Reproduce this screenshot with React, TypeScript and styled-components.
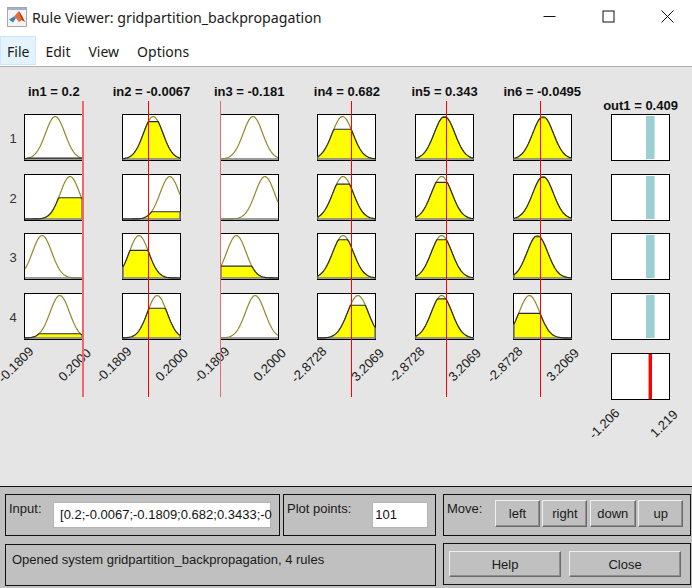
import React from "react";
import styled, { createGlobalStyle } from "styled-components";

const GlobalStyle = createGlobalStyle`
  html, body {
    margin: 0;
    padding: 0;
    background: #e5e5e5;
  }
`;

type Mf = { center: number; level: number };
type Input = {
  title: string;
  value: number;
  faded?: boolean;
  sigma: number;
  ticks: [string, string];
  rules: Mf[];
};

const inputs: Input[] = [
  {
    title: "in1 = 0.2",
    value: 1,
    faded: true,
    sigma: 0.17,
    ticks: ["-0.1809", "0.2000"],
    rules: [
      { center: 0.53, level: 0.02 },
      { center: 0.79, level: 0.5 },
      { center: 0.3, level: 0 },
      { center: 0.61, level: 0.1 },
    ],
  },
  {
    title: "in2 = -0.0067",
    value: 0.45,
    sigma: 0.17,
    ticks: ["-0.1809", "0.2000"],
    rules: [
      { center: 0.53, level: 0.88 },
      { center: 0.82, level: 0.17 },
      { center: 0.28, level: 0.65 },
      { center: 0.6, level: 0.7 },
    ],
  },
  {
    title: "in3 = -0.181",
    value: 0,
    faded: true,
    sigma: 0.17,
    ticks: ["-0.1809", "0.2000"],
    rules: [
      { center: 0.56, level: 0 },
      { center: 0.77, level: 0 },
      { center: 0.27, level: 0.28 },
      { center: 0.6, level: 0 },
    ],
  },
  {
    title: "in4 = 0.682",
    value: 0.58,
    sigma: 0.18,
    ticks: ["-2.8728", "3.2069"],
    rules: [
      { center: 0.43, level: 0.7 },
      { center: 0.44, level: 0.82 },
      { center: 0.44, level: 0.9 },
      { center: 0.7, level: 0.77 },
    ],
  },
  {
    title: "in5 = 0.343",
    value: 0.53,
    sigma: 0.18,
    ticks: ["-2.8728", "3.2069"],
    rules: [
      { center: 0.5, level: 0.98 },
      { center: 0.45, level: 0.86 },
      { center: 0.45, level: 0.9 },
      { center: 0.45, level: 0.92 },
    ],
  },
  {
    title: "in6 = -0.0495",
    value: 0.47,
    sigma: 0.18,
    ticks: ["-2.8728", "3.2069"],
    rules: [
      { center: 0.51, level: 0.97 },
      { center: 0.51, level: 0.98 },
      { center: 0.41, level: 0.97 },
      { center: 0.27, level: 0.58 },
    ],
  },
];

const W = 57;
const BASE = 44;
const PEAK = 42.5;

const gauss = (t: number, center: number, sigma: number) =>
  Math.exp(-((t - center) ** 2) / (2 * sigma * sigma));

const MfCurve = ({ mf, sigma }: { mf: Mf; sigma: number }) => {
  const full: string[] = [];
  const clipped: string[] = [];
  for (let i = 0; i <= 60; i++) {
    const t = i / 60;
    const g = gauss(t, mf.center, sigma);
    const x = (t * W).toFixed(2);
    full.push(`${x},${(BASE - g * PEAK).toFixed(2)}`);
    clipped.push(`${x},${(BASE - Math.min(g, mf.level) * PEAK).toFixed(2)}`);
  }
  const first = clipped[0].split(",")[1];
  const last = clipped[60].split(",")[1];
  return (
    <PlotSvg viewBox={`0 0 ${W} 45`}>
      <polyline points={full.join(" ")} fill="none" stroke="#928a2a" strokeWidth="1.2" />
      <polygon points={`0,${BASE} ${clipped.join(" ")} ${W},${BASE}`} fill="#ffff00" />
      <path
        d={`M0 ${first}V${BASE}H${W}V${last}`}
        fill="none"
        stroke="#7c7c7c"
        strokeWidth="1.6"
      />
      {mf.level > 0 && (
        <polyline points={clipped.join(" ")} fill="none" stroke="#2b2b2b" strokeWidth="1.2" />
      )}
    </PlotSvg>
  );
};

const App = () => {
  return (
    <Window>
      <GlobalStyle />
      <TitleBar>
        <AppIcon viewBox="0 0 20 20">
          <rect x="0.5" y="0.5" width="19" height="19" fill="#f4f4f4" stroke="#a8a8a8" />
          <rect x="1" y="1" width="18" height="2" fill="#9fb4c8" />
          <path d="M2 12.5 7 9.5 9 11 6 15.5Z" fill="#3f7fb8" />
          <path d="M7 9.5 12 4 15 9 18 15 15 13 12 15 9 11Z" fill="#e2703a" />
          <path d="M12 4 15 9 18 15 15 13 13 8Z" fill="#b03a1e" />
        </AppIcon>
        <TitleText>Rule Viewer: gridpartition_backpropagation</TitleText>
        <WindowControls>
          <svg width="13" height="13" viewBox="0 0 13 13">
            <path d="M0.5 6.5H12.5" stroke="#111" fill="none" />
          </svg>
          <svg width="13" height="13" viewBox="0 0 13 13">
            <rect x="1" y="1" width="11" height="11" stroke="#111" fill="none" />
          </svg>
          <svg width="13" height="13" viewBox="0 0 13 13">
            <path d="M0.5 0.5 12.5 12.5M12.5 0.5 0.5 12.5" stroke="#111" fill="none" />
          </svg>
        </WindowControls>
      </TitleBar>
      <MenuBar>
        <MenuItem $active>File</MenuItem>
        <MenuItem>Edit</MenuItem>
        <MenuItem>View</MenuItem>
        <MenuItem>Options</MenuItem>
      </MenuBar>

      <Main>
        <RowLabels>
          {[1, 2, 3, 4].map((n) => (
            <RowLabel key={n}>{n}</RowLabel>
          ))}
        </RowLabels>
        <Columns>
          {inputs.map((input) => (
            <Column key={input.title}>
              <ColumnTitle>{input.title}</ColumnTitle>
              <Stack>
                {input.rules.map((mf, i) => (
                  <PlotFrame key={i}>
                    <MfCurve mf={mf} sigma={input.sigma} />
                  </PlotFrame>
                ))}
              </Stack>
              <TickRow>
                <Tick>{input.ticks[0]}</Tick>
                <Tick>{input.ticks[1]}</Tick>
              </TickRow>
              <ValueLine $faded={input.faded} style={{ left: input.value * 58 }} />
            </Column>
          ))}
          <OutputColumn>
            <ColumnTitle $low>out1 = 0.409</ColumnTitle>
            <Stack>
              {[0, 1, 2, 3].map((i) => (
                <PlotFrame key={i}>
                  <OutBar />
                </PlotFrame>
              ))}
              <PlotFrame>
                <OutResult />
              </PlotFrame>
            </Stack>
            <TickRow $output>
              <Tick>-1.206</Tick>
              <Tick>1.219</Tick>
            </TickRow>
          </OutputColumn>
        </Columns>
      </Main>

      <Controls>
        <LeftControls>
          <TopBoxes>
            <Box $width={275}>
              <BoxLabel>Input:</BoxLabel>
              <Field $width={218} $left={11.5} $pad={6}>
                [0.2;-0.0067;-0.1809;0.682;0.3433;-0
              </Field>
            </Box>
            <Box $width={153}>
              <BoxLabel>Plot points:</BoxLabel>
              <Field $width={56} $left={21} $pad={2}>
                101
              </Field>
            </Box>
          </TopBoxes>
          <StatusBox>Opened system gridpartition_backpropagation, 4 rules</StatusBox>
        </LeftControls>
        <RightControls>
          <Box $width={248}>
            <BoxLabel>Move:</BoxLabel>
            <MoveButtons>
              <RaisedButton $width={45}>left</RaisedButton>
              <RaisedButton $width={45}>right</RaisedButton>
              <RaisedButton $width={46}>down</RaisedButton>
              <RaisedButton $width={45}>up</RaisedButton>
            </MoveButtons>
          </Box>
          <ActionBox>
            <RaisedButton $width={112} $height={26}>
              Help
            </RaisedButton>
            <RaisedButton $width={112} $height={26}>
              Close
            </RaisedButton>
          </ActionBox>
        </RightControls>
      </Controls>
    </Window>
  );
};

export default App;

const Window = styled.div`
  width: 692px;
  height: 588px;
  display: flex;
  flex-direction: column;
  overflow: hidden;
  background: #e5e5e5;
  font-family: "Liberation Sans", Arial, sans-serif;
  font-size: 13px;
  color: #1a1a1a;
`;

const TitleBar = styled.div`
  height: 36px;
  flex: none;
  display: flex;
  align-items: center;
  padding-left: 7px;
  background: #fff;
`;

const AppIcon = styled.svg`
  width: 20px;
  height: 20px;
  margin-top: -2px;
  flex: none;
`;

const TitleText = styled.div`
  margin-left: 5px;
  margin-top: -2px;
  font-family: "Noto Sans", sans-serif;
  font-size: 14.2px;
  color: #1a1a1a;
  white-space: nowrap;
`;

const WindowControls = styled.div`
  margin-left: auto;
  margin-top: -3px;
  display: flex;
  gap: 46px;
  padding-right: 18px;
`;

const MenuBar = styled.div`
  height: 30px;
  flex: none;
  display: flex;
  background: #fff;
  border-bottom: 1px solid #b0b0b0;
`;

const MenuItem = styled.div<{ $active?: boolean }>`
  box-sizing: border-box;
  height: 29px;
  padding: 2px 6px 0 6px;
  margin-right: ${(p) => (p.$active ? "2px" : "4px")};
  display: flex;
  align-items: center;
  font-family: "Noto Sans", sans-serif;
  font-size: 14px;
  color: #1a1a1a;
  background: ${(p) => (p.$active ? "#e5f3ff" : "transparent")};
  border: 1px solid ${(p) => (p.$active ? "#cce8ff" : "transparent")};
`;

const Main = styled.div`
  flex: 1;
  display: flex;
  padding-top: 17px;
`;

const RowLabels = styled.div`
  width: 24.3px;
  flex: none;
  box-sizing: border-box;
  padding: 31.3px 0 0 2px;
  display: flex;
  flex-direction: column;
  gap: 12.6px;
`;

const RowLabel = styled.div`
  height: 47px;
  display: flex;
  align-items: center;
  justify-content: center;
  color: #333;
`;

const Columns = styled.div`
  display: flex;
  gap: 38.7px;
`;

const Column = styled.div`
  position: relative;
  width: 59px;
  display: flex;
  flex-direction: column;
`;

const OutputColumn = styled(Column)`
  margin-left: 0.6px;
`;

const ColumnTitle = styled.div<{ $low?: boolean }>`
  height: 14px;
  margin-top: ${(p) => (p.$low ? "15px" : "1px")};
  margin-bottom: ${(p) => (p.$low ? "1.3px" : "15.3px")};
  line-height: 14px;
  display: flex;
  justify-content: center;
  font-weight: 700;
  color: #111;
  white-space: nowrap;
`;

const Stack = styled.div`
  display: flex;
  flex-direction: column;
  gap: 12.6px;
`;

const PlotFrame = styled.div`
  box-sizing: border-box;
  width: 59px;
  height: 47px;
  flex: none;
  position: relative;
  display: flex;
  background: #fff;
  border: 1px solid #000;
`;

const PlotSvg = styled.svg`
  display: block;
  width: 57px;
  height: 45px;
  overflow: visible;
`;

const OutBar = styled.div`
  width: 8px;
  height: 43px;
  margin: 1px 0 0 34px;
  background: #9ccfd1;
  border-right: 1px solid #c6e2e3;
`;

const OutResult = styled.div`
  width: 3px;
  height: 45px;
  margin-left: 36px;
  background: #ff0000;
  border-left: 1px solid #f79a9a;
`;

const TickRow = styled.div<{ $output?: boolean }>`
  display: flex;
  justify-content: space-between;
  margin: ${(p) =>
    p.$output ? "17px -11px 0 -25px" : "18px -11px 0 -30px"};
`;

const Tick = styled.div`
  line-height: 14px;
  transform: rotate(-45deg);
  color: #1a1a1a;
  white-space: nowrap;
`;

const ValueLine = styled.div<{ $faded?: boolean }>`
  position: absolute;
  top: 17px;
  height: 296px;
  width: ${(p) => (p.$faded ? "1.5px" : "1px")};
  background: ${(p) => (p.$faded ? "#f0686c" : "#ff0000")};
`;

const Controls = styled.div`
  height: 102px;
  flex: none;
  box-sizing: border-box;
  display: flex;
  gap: 7px;
  padding: 7px 0 0 5px;
  background: #c0c0c0;
  border-top: 1px solid #111;
`;

const LeftControls = styled.div`
  width: 431px;
  display: flex;
  flex-direction: column;
  gap: 8px;
`;

const RightControls = styled.div`
  width: 248px;
  display: flex;
  flex-direction: column;
  gap: 7px;
`;

const TopBoxes = styled.div`
  display: flex;
  gap: 3px;
`;

const Box = styled.div<{ $width: number }>`
  box-sizing: border-box;
  width: ${(p) => p.$width}px;
  height: 42px;
  padding: 5px 3px 0 3px;
  display: flex;
  align-items: flex-start;
  border: 1px solid #111;
`;

const BoxLabel = styled.div`
  line-height: 16px;
  margin-top: 1px;
  white-space: nowrap;
  color: #1a1a1a;
`;

const Field = styled.div<{ $width: number; $left: number; $pad: number }>`
  box-sizing: border-box;
  width: ${(p) => p.$width}px;
  height: 26px;
  margin: 2px 0 0 ${(p) => p.$left}px;
  padding: 0 0 0 ${(p) => p.$pad}px;
  line-height: 24px;
  background: #fff;
  border: 1px solid #b4b4b4;
  white-space: nowrap;
  color: #111;
`;

const StatusBox = styled.div`
  box-sizing: border-box;
  height: 42px;
  padding: 7px 6px 0;
  line-height: 16px;
  border: 1px solid #111;
  color: #1a1a1a;
`;

const MoveButtons = styled.div`
  margin-left: 12.6px;
  display: flex;
  gap: 2.4px;
`;

const ActionBox = styled.div`
  box-sizing: border-box;
  height: 42px;
  padding: 0 9px 0 5px;
  display: flex;
  align-items: center;
  justify-content: space-between;
  border: 1px solid #111;
`;

const RaisedButton = styled.div<{ $width: number; $height?: number }>`
  box-sizing: border-box;
  width: ${(p) => p.$width}px;
  height: ${(p) => p.$height ?? 27}px;
  display: flex;
  align-items: center;
  justify-content: center;
  background: #c0c0c0;
  color: #1a1a1a;
  border: 1px solid;
  border-color: #efefef #6a6a6a #6a6a6a #efefef;
  box-shadow: inset -1px -1px 0 #8e8e8e;
`;
